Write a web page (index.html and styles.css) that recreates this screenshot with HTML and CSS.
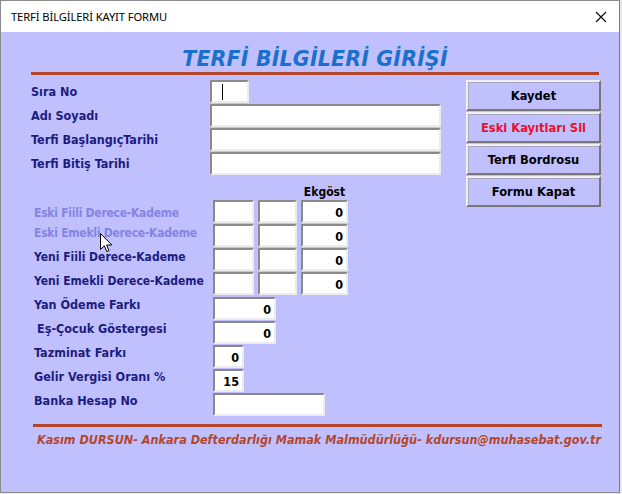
FILE: index.html
```html
<!DOCTYPE html>
<html lang="tr">
<head>
<meta charset="utf-8">
<title>TERFİ BİLGİLERİ KAYIT FORMU</title>
<link rel="stylesheet" href="styles.css">
</head>
<body>
<div class="window">
  <div class="titlebar">
    <span class="title">TERFİ BİLGİLERİ KAYIT FORMU</span>
    <svg class="close" width="12" height="12" viewBox="0 0 12 12"><path d="M1 1 L11 11 M11 1 L1 11" stroke="#000" stroke-width="1.1" fill="none"/></svg>
  </div>
  <div class="client">
    <div class="heading">TERFİ BİLGİLERİ GİRİŞİ</div>
    <div class="rule"></div>
    <div class="main">
      <div class="left">
        <div class="top-fields">
          <div class="lbl">Sıra No</div><div class="tb w39"><span class="caret"></span></div>
          <div class="lbl">Adı Soyadı</div><div class="tb w231"></div>
          <div class="lbl">Terfi BaşlangıçTarihi</div><div class="tb w231"></div>
          <div class="lbl">Terfi Bitiş Tarihi</div><div class="tb w231"></div>
        </div>
        <div class="grid-head"><span class="ek">Ekgöst</span></div>
        <div class="dk-grid">
          <div class="lbl2 dis first">Eski Fiili Derece-Kademe</div><div class="tb"></div><div class="tb"></div><div class="tb num">0</div>
          <div class="lbl2 dis">Eski Emekli Derece-Kademe</div><div class="tb"></div><div class="tb"></div><div class="tb num">0</div>
          <div class="lbl2">Yeni Fiili Derece-Kademe</div><div class="tb"></div><div class="tb"></div><div class="tb num">0</div>
          <div class="lbl2">Yeni Emekli Derece-Kademe</div><div class="tb"></div><div class="tb"></div><div class="tb num">0</div>
        </div>
        <div class="low-fields">
          <div class="lbl3">Yan Ödeme Farkı</div><div class="tb num w63">0</div>
          <div class="lbl3 ind">Eş-Çocuk Göstergesi</div><div class="tb num w63">0</div>
          <div class="lbl3">Tazminat Farkı</div><div class="tb num w31">0</div>
          <div class="lbl3">Gelir Vergisi Oranı %</div><div class="tb num w31">15</div>
          <div class="lbl3">Banka Hesap No</div><div class="tb w112"></div>
        </div>
      </div>
      <div class="buttons">
        <div class="btn">Kaydet</div>
        <div class="btn red">Eski Kayıtları Sil</div>
        <div class="btn">Terfi Bordrosu</div>
        <div class="btn">Formu Kapat</div>
      </div>
    </div>
    <div class="rule foot-rule"></div>
    <div class="footer">Kasım DURSUN- Ankara Defterdarlığı Mamak Malmüdürlüğü- kdursun@muhasebat.gov.tr</div>
  </div>
  <svg class="pointer" width="13" height="20" viewBox="0 0 13 20"><path d="M0.5 0.5 L0.5 16.5 L4.3 12.8 L6.8 18.6 L9 17.6 L6.6 12 L11.8 12 Z" fill="#fff" stroke="#000" stroke-width="1" stroke-linejoin="miter"/></svg>
</div>
</body>
</html>
```

FILE: styles.css
```css
html, body {
  margin: 0;
  padding: 0;
}
body {
  background: #e9e9e9;
  width: 622px;
  height: 494px;
  overflow: hidden;
}
.window {
  position: relative;
  width: 620px;
  height: 493px;
  box-sizing: border-box;
  border: 1px solid #8c8c8c;
  border-right-color: #7a7a7a;
  background: #c0c0ff;
  display: flex;
  flex-direction: column;
}
.titlebar {
  height: 31px;
  flex: none;
  background: #ffffff;
  display: flex;
  align-items: center;
  justify-content: space-between;
  padding: 0 12px 0 10px;
}
.title {
  font-family: "Noto Sans", "DejaVu Sans", sans-serif;
  font-size: 11.2px;
  color: #000;
  letter-spacing: -0.1px;
}
.close {
  display: block;
}
.client {
  flex: 1;
  background: #c0c0ff;
  padding-left: 30px;
  font-family: "DejaVu Sans Condensed", "DejaVu Sans", sans-serif;
  font-stretch: condensed;
  font-weight: bold;
  font-size: 12.5px;
  color: #1c1c7e;
}
.heading {
  height: 40px;
  box-sizing: border-box;
  padding-top: 15px;
  line-height: 24px;
  width: 568px;
  text-align: center;
  font-family: "DejaVu Sans", sans-serif;
  font-stretch: normal;
  font-style: italic;
  font-weight: bold;
  font-size: 20.5px;
  color: #1a70cc;
  letter-spacing: 0.2px;
}
.rule {
  height: 3px;
  width: 568px;
  background: #b4462b;
}
.main {
  display: flex;
  margin-top: 5px;
}
.left {
  width: 435px;
}
.top-fields {
  display: grid;
  grid-template-columns: 179px auto;
  grid-auto-rows: 23px;
  row-gap: 1px;
  align-items: center;
  justify-items: start;
}
.tb {
  box-sizing: border-box;
  height: 23px;
  background: #ffffff;
  border-style: solid;
  border-width: 2px;
  border-color: #8a8a8a #ececec #ececec #8a8a8a;
  color: #000;
  font-size: 12.5px;
  line-height: 17px;
  display: flex;
  align-items: center;
}
.w39 { width: 39px; }
.w231 { width: 231px; }
.w63 { width: 63px; }
.w31 { width: 31px; }
.w112 { width: 112px; }
.caret {
  display: block;
  width: 1px;
  height: 16px;
  background: #000;
  margin-left: 10px;
}
.lbl {
  line-height: 23px;
  white-space: nowrap;
}
.grid-head {
  height: 25px;
  box-sizing: border-box;
  padding-top: 10px;
  padding-left: 270px;
  line-height: 14px;
  font-size: 12px;
  color: #000;
}
.ek {
  display: inline-block;
  width: 47px;
  text-align: center;
}
.dk-grid {
  display: grid;
  grid-template-columns: 175px 41px 39px 47px;
  grid-auto-rows: 23px;
  row-gap: 1px;
  column-gap: 4px;
  margin-left: 3px;
  margin-right: -10px;
}
.lbl2 {
  font-size: 12px;
  line-height: 18px;
  white-space: nowrap;
  align-self: start;
}
.lbl2.first {
  align-self: center;
  line-height: 20px;
  padding-top: 3px;
}
.dis {
  color: #8484e4;
  letter-spacing: -0.25px;
}
.num {
  justify-content: flex-end;
  padding-right: 3px;
  padding-top: 2px;
  font-weight: bold;
}
.low-fields {
  display: grid;
  grid-template-columns: 179px auto;
  grid-auto-rows: 23px;
  row-gap: 1px;
  margin-top: 2px;
  margin-left: 3px;
  justify-items: start;
}
.lbl3 {
  line-height: 16px;
  align-self: start;
  white-space: nowrap;
}
.lbl3.ind {
  padding-left: 3px;
}
.buttons {
  display: flex;
  flex-direction: column;
  gap: 1px;
}
.btn {
  box-sizing: border-box;
  width: 135px;
  height: 31px;
  border-style: solid;
  border-width: 2px;
  border-color: #eeeef6 #767676 #767676 #eeeef6;
  box-shadow: inset 1px 1px 0 #a9a9c0;
  background: #c0c0ff;
  color: #000;
  font-size: 12.8px;
  display: flex;
  align-items: center;
  justify-content: center;
}
.btn.red {
  color: #e8102c;
}
.foot-rule {
  margin-top: 8px;
  margin-left: 2px;
  width: 569px;
}
.footer {
  margin-top: 5px;
  padding-left: 6px;
  line-height: 16px;
  font-style: italic;
  font-size: 12.5px;
  color: #b4462b;
  white-space: nowrap;
}
.pointer {
  position: absolute;
  left: 99px;
  top: 232px;
}
```
